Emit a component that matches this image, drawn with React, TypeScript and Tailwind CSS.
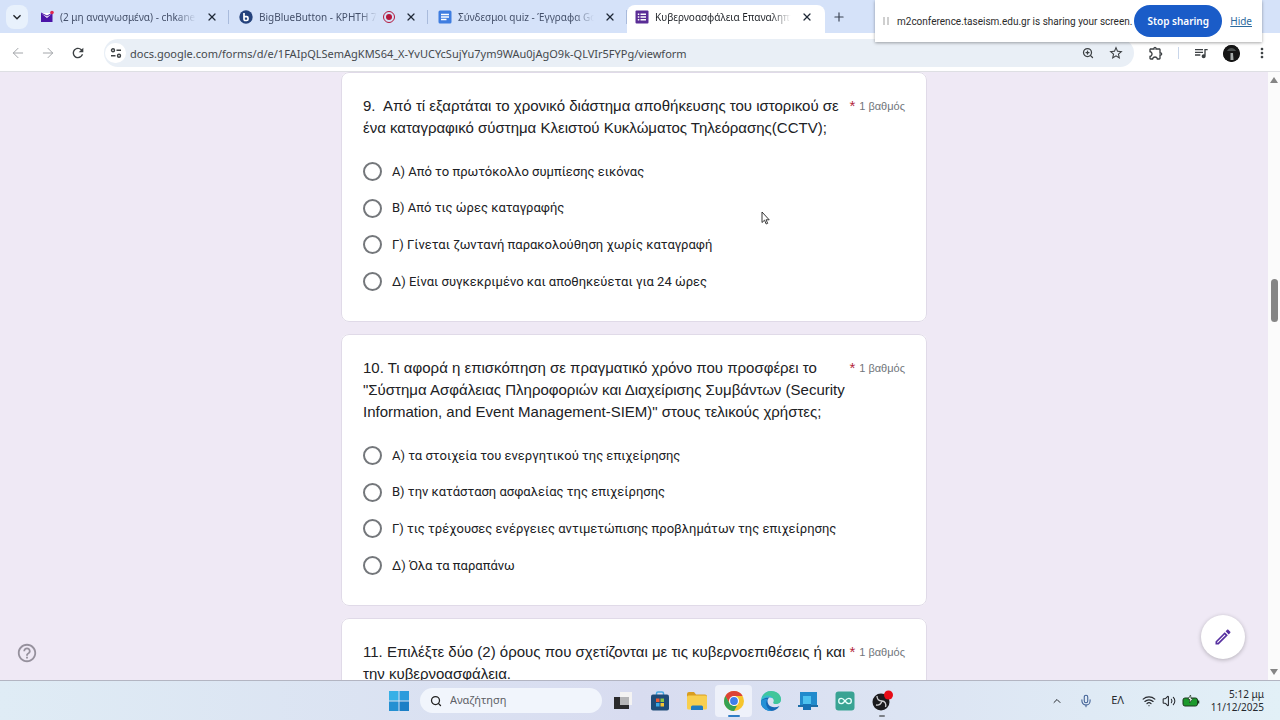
import React from 'react';
import { ArrowLeft, ArrowRight, Plus, X, ChevronUp, Mic, Search, Wifi, Volume2, ZoomIn } from 'lucide-react';
import { MdRefresh, MdStarBorder, MdOutlineExtension, MdQueueMusic, MdMoreVert, MdHelpOutline, MdOutlineEdit, MdKeyboardArrowDown } from 'react-icons/md';

type Question = {
  id: string;
  lines: string[];
  options: string[];
};

const questions: Question[] = [
  {
    id: 'q9',
    lines: [
      '9.\u00a0 Από τί εξαρτάται το χρονικό διάστημα αποθήκευσης του ιστορικού σε',
      'ένα καταγραφικό σύστημα Κλειστού Κυκλώματος Τηλεόρασης(CCTV);',
    ],
    options: [
      'Α) Από το πρωτόκολλο συμπίεσης εικόνας',
      'Β) Από τις ώρες καταγραφής',
      'Γ) Γίνεται ζωντανή παρακολούθηση χωρίς καταγραφή',
      'Δ) Είναι συγκεκριμένο και αποθηκεύεται για 24 ώρες',
    ],
  },
  {
    id: 'q10',
    lines: [
      '10. Τι αφορά η επισκόπηση σε πραγματικό χρόνο που προσφέρει το',
      '"Σύστημα Ασφάλειας Πληροφοριών και Διαχείρισης Συμβάντων (Security',
      'Information, and Event Management-SIEM)" στους τελικούς χρήστες;',
    ],
    options: [
      'Α) τα στοιχεία του ενεργητικού της επιχείρησης',
      'Β) την κατάσταση ασφαλείας της επιχείρησης',
      'Γ) τις τρέχουσες ενέργειες αντιμετώπισης προβλημάτων της επιχείρησης',
      'Δ) Όλα τα παραπάνω',
    ],
  },
  {
    id: 'q11',
    lines: [
      '11. Επιλέξτε δύο (2) όρους που σχετίζονται με τις κυβερνοεπιθέσεις ή και',
      'την κυβερνοασφάλεια.',
    ],
    options: [],
  },
];

function MailIcon() {
  return (
    <svg viewBox="0 0 14 14" className="h-3.5 w-3.5 shrink-0">
      <path d="M1 3h11.500v9H1z" fill="#4b14a8" />
      <path d="M1 3l6 5 5.500-5z" fill="#fff" />
      <path d="M1 3l6 3 5.500-3" fill="none" stroke="#4b14a8" strokeWidth="1" />
      <circle cx="12" cy="2.500" r="1.800" fill="#e0284f" />
    </svg>
  );
}

function BbbIcon() {
  return (
    <svg viewBox="0 0 14 14" className="h-3.5 w-3.5 shrink-0">
      <circle cx="7" cy="7" r="6.700" fill="#24427c" />
      <path d="M5 3v6.200a1.300 1.300 0 0 0 1.300 1.300h1.400A1.300 1.300 0 0 0 9 9.200V8a1.300 1.300 0 0 0-1.300-1.300H5" fill="none" stroke="#fff" strokeWidth="1.700" />
    </svg>
  );
}

function DocsIcon() {
  return (
    <svg viewBox="0 0 14 14" className="h-3.5 w-3.5 shrink-0">
      <rect x="0.500" y="0.500" width="13" height="13" rx="1.500" fill="#3f7de0" />
      <path d="M3 4.500h8M3 7h8M3 9.500h5.500" stroke="#fff" strokeWidth="1.300" />
    </svg>
  );
}

function FormsIcon() {
  return (
    <svg viewBox="0 0 14 14" className="h-3.5 w-3.5 shrink-0">
      <rect x="0.500" y="0.500" width="13" height="13" rx="1" fill="#5a2d96" />
      <path d="M5.500 4.200h5.500M5.500 7h5.500M5.500 9.800h5.500" stroke="#fff" strokeWidth="1.500" />
      <path d="M2.800 4.200h1.500M2.800 7h1.500M2.800 9.800h1.500" stroke="#fff" strokeWidth="1.500" />
    </svg>
  );
}

function Tab({ icon, title, recording, active }: { icon: React.ReactNode; title: string; recording?: boolean; active?: boolean }) {
  return (
    <div
      className={
        active
          ? 'flex h-7 w-[198px] items-center gap-1.5 rounded-t-lg bg-white pr-3 pb-1 pl-2 text-[#1f2328]'
          : 'flex h-7 w-[199px] items-center gap-1.5 pb-1 pl-2.5 text-[#44506a]'
      }
    >
      {icon}
      <span className="min-w-0 flex-1 whitespace-nowrap [mask-image:linear-gradient(to_right,black_85%,transparent)]">{title}</span>
      {recording && (
        <span className="flex h-3 w-3 shrink-0 items-center justify-center rounded-full border border-[#b3173c]">
          <span className="h-1.5 w-1.5 rounded-full bg-[#b3173c]" />
        </span>
      )}
      <button aria-label="Κλείσιμο καρτέλας" className="ml-1 shrink-0 text-[#1f2937]">
        <X className="h-3 w-3" strokeWidth={2.5} />
      </button>
      {!active && <span className="ml-1 h-3.5 w-px bg-[#a9bbdc]" />}
    </div>
  );
}

function TabStrip() {
  return (
    <div className="flex h-[33px] items-end bg-[#d5e2f9]">
      <div className="flex h-7 items-center pr-0.5 pb-1 pl-1.5">
        <button aria-label="Αναζήτηση καρτελών" className="flex h-6 w-[22px] items-center justify-center rounded-lg bg-[#e8f1fc] text-[#1f2328]">
          <MdKeyboardArrowDown className="h-4 w-4" />
        </button>
      </div>
      <Tab icon={<MailIcon />} title="(2 μη αναγνωσμένα) - chkanell" />
      <Tab icon={<BbbIcon />} title="BigBlueButton - ΚΡΗΤΗ 738" recording />
      <Tab icon={<DocsIcon />} title="Σύνδεσμοι quiz - Έγγραφα Goo" />
      <Tab icon={<FormsIcon />} title="Κυβερνοασφάλεια Επαναληπτι" active />
      <button aria-label="Νέα καρτέλα" className="flex h-7 w-7 items-center justify-center pb-1 text-[#3a4252]">
        <Plus className="h-3.5 w-3.5" />
      </button>
    </div>
  );
}

function Toolbar() {
  return (
    <div className="flex h-[39px] items-center border-b border-[#dedfe3] bg-white pt-0.5 pl-2.5 text-[#3c4043]">
      <div className="flex w-[94px] items-center gap-[14px]">
        <button aria-label="Πίσω" className="text-[#a3a6aa]"><ArrowLeft className="h-4 w-4" strokeWidth={1.5} /></button>
        <button aria-label="Εμπρός" className="text-[#a3a6aa]"><ArrowRight className="h-4 w-4" strokeWidth={1.5} /></button>
        <button aria-label="Επαναφόρτωση"><MdRefresh className="h-4 w-4" /></button>
      </div>
      <div className="flex h-7 min-w-0 flex-1 items-center rounded-full bg-[#e9eff6] pr-2.5 pl-px">
        <button aria-label="Πληροφορίες ιστότοπου" className="mr-1 flex h-5 w-[21px] items-center justify-center rounded-full bg-white">
          <svg viewBox="0 0 12 12" className="h-3 w-3" fill="none" stroke="currentColor" strokeWidth="1.400">
            <circle cx="3" cy="3.300" r="1.500" />
            <path d="M6.500 3.300H11M1 8.700h4.500" />
            <circle cx="9" cy="8.700" r="1.500" />
          </svg>
        </button>
        <input
          aria-label="Γραμμή διευθύνσεων"
          readOnly
          value="docs.google.com/forms/d/e/1FAIpQLSemAgKMS64_X-YvUCYcSujYu7ym9WAu0jAgO9k-QLVIr5FYPg/viewform"
          className="h-6 min-w-0 flex-1 bg-transparent text-[11px] text-[#45494d] outline-none"
        />
        <button aria-label="Ζουμ" className="mr-3.5"><ZoomIn className="h-3 w-3" strokeWidth={2.5} /></button>
        <button aria-label="Σελιδοδείκτης"><MdStarBorder className="h-4 w-4" /></button>
      </div>
      <button aria-label="Επεκτάσεις" className="ml-3.5"><MdOutlineExtension className="h-4 w-4" /></button>
      <span className="mx-3.5 h-3 w-px bg-[#c9d6ea]" />
      <button aria-label="Πολυμέσα" className="mr-3.5"><MdQueueMusic className="h-4 w-4" /></button>
      <button aria-label="Προφίλ" className="mr-3.5 h-[17px] w-[17px] overflow-hidden rounded-full bg-[#111]">
        <svg viewBox="0 0 17 17" className="h-full w-full">
          <circle cx="8.500" cy="8.500" r="8.500" fill="#151515" />
          <path d="M4 6c2-4 7-4 9 0z" fill="#4a4f4f" />
          <path d="M7.500 8h2.500l.5 7h-3z" fill="#a5aaa9" />
        </svg>
      </button>
      <button aria-label="Μενού"><MdMoreVert className="h-4 w-4" /></button>
      <span className="w-2.5" />
    </div>
  );
}

function SharingBar() {
  return (
    <div className="absolute top-0 right-[18px] z-10 flex h-[42px] w-[387px] items-center bg-white pr-2.5 pl-2 text-[10px] shadow-[0_1px_3px_rgba(0,0,0,0.35)]">
      <span className="mr-2 flex gap-0.5">
        <span className="h-2 w-0.5 bg-[#cfcfcf]" />
        <span className="h-2 w-0.5 bg-[#cfcfcf]" />
      </span>
      <span className="min-w-0 flex-1 font-[Roboto,sans-serif] whitespace-nowrap text-[#2b2b2b]">m2conference.taseism.edu.gr is sharing your screen.</span>
      <button className="h-8 w-[88px] shrink-0 rounded-full bg-[#1a5cc8] font-semibold whitespace-nowrap text-white">Stop sharing</button>
      <a href="#hide" className="ml-2 text-[#2c6a9e] underline">Hide</a>
    </div>
  );
}

function QuestionCard({ question }: { question: Question }) {
  return (
    <fieldset className="w-full max-w-[586px] rounded-lg border border-[#e0dae8] bg-white px-[21px] pt-[22px] pb-[30px]">
      <div className="flex font-['Liberation_Sans',Arial,sans-serif] leading-[22px]">
        <div id={question.id} className="min-w-0 flex-1 text-[15px] whitespace-nowrap text-[#202124]">
          {question.lines.map(line => (
            <p key={line}>{line}</p>
          ))}
        </div>
        <span className="mr-1 text-[15px] text-[#b3263a]">*</span>
        <span className="text-[11px] text-[#70757a]">1 βαθμός</span>
      </div>
      {question.options.length > 0 && (
        <div role="radiogroup" aria-labelledby={question.id} className="mt-[23px] flex h-[129px] flex-col justify-between">
          {question.options.map(option => (
            <label key={option} className="flex h-[19px] items-center gap-2.5 font-[Roboto,sans-serif] text-[13px] text-[#202124]">
              <input type="radio" name={question.id} className="h-[19px] w-[19px] shrink-0 appearance-none rounded-full border-2 border-[#74777b]" />
              {option}
            </label>
          ))}
        </div>
      )}
    </fieldset>
  );
}

function Scrollbar() {
  return (
    <div className="flex w-3 shrink-0 flex-col items-center bg-[#fbfbfb] py-1">
      <svg viewBox="0 0 10 8" className="h-2 w-2.5"><path d="M5 1l4 6H1z" fill="#858585" /></svg>
      <span className="grow-[195]" />
      <span className="h-[43px] w-[7px] rounded-full bg-[#858585]" />
      <span className="grow-[346]" />
      <svg viewBox="0 0 10 8" className="h-2 w-2.5"><path d="M5 7l4-6H1z" fill="#858585" /></svg>
    </div>
  );
}

function TaskbarApp({ label, active, running, children }: { label: string; active?: boolean; running?: boolean; children: React.ReactNode }) {
  return (
    <button
      aria-label={label}
      className={active ? 'relative flex h-8 w-[37px] items-center justify-center rounded bg-[#eef1fa]' : 'relative flex h-8 w-[37px] items-center justify-center'}
    >
      <svg viewBox="0 0 22 22" className="h-[22px] w-[22px]">{children}</svg>
      {active && <span className="absolute bottom-0 h-0.5 w-3 rounded-full bg-[#2f7cc4]" />}
      {running && <span className="absolute bottom-0 h-0.5 w-1.5 rounded-full bg-[#7c8087]" />}
    </button>
  );
}

function Taskbar() {
  return (
    <footer className="grid h-10 shrink-0 grid-cols-[1fr_auto_1fr] items-center border-t border-[#b3b5c2] bg-linear-to-r from-[#dfecf5] via-[#d8dcf0] to-[#e2f0f7]">
      <span />
      <div className="flex items-center">
        <TaskbarApp label="Έναρξη">
          <path d="M1 1h9.500v9.500H1z" fill="#36b0e6" />
          <path d="M11.500 1H21v9.500h-9.500z" fill="#2c9bdc" />
          <path d="M1 11.500h9.500V21H1z" fill="#2490d2" />
          <path d="M11.500 11.500H21V21h-9.500z" fill="#1b7fc6" />
        </TaskbarApp>
        <label className="mr-0.5 ml-[3px] flex h-[25px] w-[182px] items-center gap-2 rounded-full bg-[#f1f5fc] pl-2.5">
          <Search className="h-3 w-3 shrink-0 text-[#222]" strokeWidth={2.5} />
          <input aria-label="Αναζήτηση" placeholder="Αναζήτηση" className="w-full min-w-0 bg-transparent text-[11px] outline-none placeholder:text-[#5d6066]" />
        </label>
        <TaskbarApp label="Προβολή εργασιών">
          <path d="M8 2h12v13H8z" fill="#f4f3f3" />
          <path d="M2 7h15v12H2z" fill="#2a2a2c" />
          <path d="M8 7h9v8H8z" fill="#b5b5b7" />
        </TaskbarApp>
        <TaskbarApp label="Microsoft Store">
          <path d="M7.500 5V3.500A1.500 1.500 0 0 1 9 2h4a1.500 1.500 0 0 1 1.500 1.500V5" fill="none" stroke="#45a9e3" strokeWidth="1.500" />
          <rect x="2" y="4.500" width="18" height="16" rx="2" fill="#1f4c79" />
          <path d="M7 8.500h3.500V12H7z" fill="#ee5a36" />
          <path d="M11.500 8.500H15V12h-3.500z" fill="#8bc543" />
          <path d="M7 13h3.500v3.500H7z" fill="#3ba9e8" />
          <path d="M11.500 13H15v3.500h-3.500z" fill="#f7c531" />
        </TaskbarApp>
        <TaskbarApp label="Εξερεύνηση αρχείων">
          <path d="M1 4a2 2 0 0 1 2-2h5l2 2.500h9a2 2 0 0 1 2 2V10H1z" fill="#d99d20" />
          <rect x="1" y="5.500" width="20" height="14" rx="1.500" fill="#f8cf4f" />
          <path d="M5 20v-3a1.500 1.500 0 0 1 1.500-1.500h9A1.500 1.500 0 0 1 17 17v3z" fill="#217cc2" />
        </TaskbarApp>
        <TaskbarApp label="Google Chrome" active>
          <circle cx="11" cy="11" r="10" fill="#f6c52d" />
          <path d="M2.340 6A10 10 0 0 1 19.660 6H11L6.670 13.500z" fill="#dc4336" />
          <path d="M2.340 6l4.330 7.500L11 16h2.900L11 21A10 10 0 0 1 2.340 6z" fill="#35a153" />
          <circle cx="11" cy="11" r="5" fill="#fff" />
          <circle cx="11" cy="11" r="3.900" fill="#3f7fea" />
        </TaskbarApp>
        <TaskbarApp label="Microsoft Edge">
          <path d="M1 11C1 5 5.500 1 11 1c6 0 10 4 10 8.500 0 3-2.500 4.500-5 4.500-2 0-3-.8-2.500-1.700C15 9.500 12.500 7.500 9.500 7.500 5 7.500 1.500 10 1 13z" fill="#35bccb" />
          <path d="M11 1c6 0 10 4 10 8.500 0 3-2.500 4.500-5 4.500-2 0-3-.8-2.500-1.700C15 8 11 5 7 5.200 5 5.300 3 6.500 2 8 3 4 7 1 11 1z" fill="#45c98a" opacity=".75" />
          <path d="M1 12c.5-3 4-5 8.500-4.500C7 9 7 12 8.500 14.500c2 3 7 3.500 11 1.500C17.500 19.500 14 21 11 21 5 21 1 17 1 12z" fill="#1667b5" />
          <path d="M8 9c-3.500 3.500-2 10 4 12-6 .5-11-3.500-11-9 1-2.500 4-3.500 7-3z" fill="#2490d6" />
        </TaskbarApp>
        <TaskbarApp label="Σύνδεση τηλεφώνου">
          <path d="M3 2h17v13H3z" fill="#218bcc" />
          <path d="M1 15h20v2H1z" fill="#1c6da6" />
          <path d="M6 6h8v14H6z" fill="#4cc2ef" />
          <path d="M6 14h8v6H6z" fill="#1671b4" />
        </TaskbarApp>
        <TaskbarApp label="Arduino IDE">
          <rect x="1.500" y="1.500" width="19" height="19" rx="3" fill="#39a393" />
          <path d="M11 11c-1.500-2-2.500-2.600-3.700-2.600a2.600 2.600 0 0 0 0 5.200c1.200 0 2.200-.6 3.700-2.600s2.500-2.600 3.700-2.600a2.600 2.600 0 0 1 0 5.200c-1.200 0-2.200-.6-3.700-2.600z" fill="none" stroke="#e8fffb" strokeWidth="1.300" />
        </TaskbarApp>
        <TaskbarApp label="OBS Studio" running>
          <circle cx="10" cy="12" r="8.500" fill="#1b1b1d" />
          <path d="M6 6c0 3 2 5 5 5M11 11c-1 3-3 4.500-6 4M11 11c3 0 4.500 3 3.500 6" fill="none" stroke="#d0d0d2" strokeWidth="1.300" />
          <circle cx="17.500" cy="5" r="4.500" fill="#e60b16" />
        </TaskbarApp>
      </div>
      <div className="flex items-center justify-end pr-4 text-[11px] text-[#25282d]">
        <button aria-label="Κρυφά εικονίδια" className="mr-4"><ChevronUp className="h-3 w-3" /></button>
        <Mic className="mr-[18px] h-3.5 w-3.5 text-[#3f5f94]" strokeWidth={1.8} />
        <span className="mr-[18px]">ΕΛ</span>
        <Wifi className="mr-1.5 h-3.5 w-3.5" strokeWidth={2} />
        <Volume2 className="mr-1.5 h-3.5 w-3.5" strokeWidth={1.8} />
        <svg viewBox="0 0 18 12" className="mr-3 h-3 w-[18px]">
          <rect x="1" y="3" width="14.500" height="8" rx="2" fill="#1c9a2c" stroke="#1d3a20" strokeWidth="1" />
          <path d="M16.500 5.500v3" stroke="#1d3a20" strokeWidth="1.500" />
          <path d="M8.500 0L6 4.500h2L7.500 8 11 3.500H9z" fill="#fff" stroke="#1d3a20" strokeWidth=".7" />
        </svg>
        <time className="w-[52px] text-[10px] leading-[13px]">
          <span className="flex justify-end whitespace-nowrap">5:12 μμ</span>
          <span className="flex justify-end whitespace-nowrap">11/12/2025</span>
        </time>
      </div>
    </footer>
  );
}

export default function App() {
  return (
    <div className="relative flex h-screen flex-col overflow-hidden bg-[#efe9f5] font-['Noto_Sans','Open_Sans',sans-serif] text-[10px]">
      <header className="shrink-0">
        <TabStrip />
        <Toolbar />
      </header>
      <SharingBar />
      <div className="relative flex min-h-0 flex-1">
        <main className="flex min-w-0 flex-1 flex-col items-center gap-3 overflow-hidden">
          {questions.map(question => (
            <QuestionCard key={question.id} question={question} />
          ))}
        </main>
        <Scrollbar />
        <button aria-label="Βοήθεια" className="absolute bottom-4 left-4 text-[#96919d]">
          <MdHelpOutline className="h-[22px] w-[22px]" />
        </button>
        <button aria-label="Επεξεργασία" className="absolute right-[35px] bottom-[21px] flex h-11 w-11 items-center justify-center rounded-full bg-white text-[#5730a0] shadow-[0_1px_4px_rgba(0,0,0,0.25)]">
          <MdOutlineEdit className="h-5 w-5" />
        </button>
      </div>
      <Taskbar />
      <svg viewBox="0 0 9 14" className="absolute top-[211px] left-[761px] h-3.5 w-[9px]">
        <path d="M1 1v10.500l2.500-2.300 1.700 3.800 1.500-.7L5 8.800h3.200z" fill="#fff" stroke="#222" strokeWidth=".9" />
      </svg>
    </div>
  );
}
